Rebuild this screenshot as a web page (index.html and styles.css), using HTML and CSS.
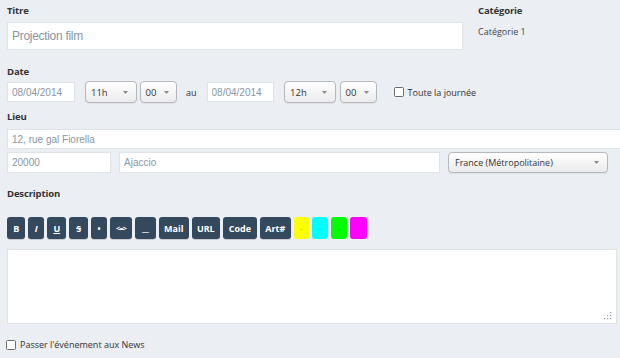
FILE: index.html
```html
<!DOCTYPE html>
<html lang="fr">
<head>
<meta charset="utf-8">
<link rel="stylesheet" href="styles.css">
</head>
<body>
<div class="page">
  <div class="row-top">
    <div class="col-title">
      <div class="lbl">Titre</div>
      <input class="field field-title" value="Projection film">
    </div>
    <div class="col-cat">
      <div class="lbl">Catégorie</div>
      <div class="cat-val">Catégorie 1</div>
    </div>
  </div>

  <div class="lbl lbl-date">Date</div>
  <div class="row-date">
    <input class="field field-date" value="08/04/2014">
    <div class="sel sel-h gap-11"><span>11h</span><svg class="arr" width="5" height="3" viewBox="0 0 5 3"><path d="M0 0H5L2.5 3Z"/></svg></div>
    <div class="sel sel-m gap-3"><span>00</span><svg class="arr" width="5" height="3" viewBox="0 0 5 3"><path d="M0 0H5L2.5 3Z"/></svg></div>
    <span class="au">au</span>
    <input class="field field-date gap-10" value="08/04/2014">
    <div class="sel sel-h gap-9"><span>12h</span><svg class="arr" width="5" height="3" viewBox="0 0 5 3"><path d="M0 0H5L2.5 3Z"/></svg></div>
    <div class="sel sel-m gap-4"><span>00</span><svg class="arr" width="5" height="3" viewBox="0 0 5 3"><path d="M0 0H5L2.5 3Z"/></svg></div>
    <label class="check gap-17"><input type="checkbox" class="box"><span>Toute la journée</span></label>
  </div>

  <div class="lbl lbl-lieu">Lieu</div>
  <input class="field field-addr" value="12, rue gal Fiorella">
  <div class="row-city">
    <input class="field field-zip" value="20000">
    <input class="field field-city" value="Ajaccio">
    <div class="sel sel-country"><span>France (Métropolitaine)</span><svg class="arr" width="5" height="3" viewBox="0 0 5 3"><path d="M0 0H5L2.5 3Z"/></svg></div>
  </div>

  <div class="lbl lbl-desc">Description</div>
  <div class="toolbar">
    <span class="btn w-b"><b>B</b></span>
    <span class="btn w-i"><i>I</i></span>
    <span class="btn w-u"><u>U</u></span>
    <span class="btn w-s"><s>S</s></span>
    <span class="btn w-dot">•</span>
    <span class="btn w-lr">&lt;=&gt;</span>
    <span class="btn w-line">__</span>
    <span class="btn w-mail">Mail</span>
    <span class="btn w-url">URL</span>
    <span class="btn w-code">Code</span>
    <span class="btn w-art">Art#</span>
    <span class="swatch sw-y w-y">-</span>
    <span class="swatch sw-c w-c">-</span>
    <span class="swatch sw-g w-g">-</span>
    <span class="swatch sw-m w-m">-</span>
  </div>

  <div class="ta-wrap">
    <textarea class="ta"></textarea>
    <svg class="grip" width="8" height="8" viewBox="0 0 8 8">
      <rect x="6" y="0" width="1.2" height="1.2"/>
      <rect x="6" y="3" width="1.2" height="1.2"/>
      <rect x="3" y="3" width="1.2" height="1.2"/>
      <rect x="6" y="6" width="1.2" height="1.2"/>
      <rect x="3" y="6" width="1.2" height="1.2"/>
      <rect x="0" y="6" width="1.2" height="1.2"/>
    </svg>
  </div>

  <label class="check check-news"><input type="checkbox" class="box"><span>Passer l'événement aux News</span></label>
</div>
</body>
</html>
```
FILE: styles.css
```css
html, body {
  margin: 0;
  padding: 0;
  background: #ebeef2;
  overflow: hidden;
}
.page {
  width: 620px;
  height: 358px;
  box-sizing: border-box;
  padding: 3px 0 0 7px;
  font-family: "Open Sans", "Liberation Sans", sans-serif;
  color: #333;
  overflow: hidden;
}
.lbl {
  font-size: 9.5px;
  font-weight: 700;
  line-height: 15px;
  color: #333;
  letter-spacing: -0.15px;
}
.row-top {
  display: flex;
}
.col-title {
  width: 456px;
  display: flex;
  flex-direction: column;
}
.col-cat {
  margin-left: 15px;
}
.cat-val {
  margin-top: 6px;
  font-size: 9px;
  line-height: 15px;
  color: #444;
}
.field {
  box-sizing: border-box;
  border: 1px solid #dfe3e8;
  background: #fff;
  font-family: "Liberation Sans", Arial, sans-serif;
  font-size: 10px;
  color: #8a96a4;
  padding: 0 0 0 4px;
  margin: 0;
  outline: none;
  height: 20px;
  border-radius: 0;
}
.field-title {
  margin-top: 4px;
  width: 456px;
  height: 28px;
  font-size: 12px;
  letter-spacing: -0.3px;
  padding-left: 4px;
}
.lbl-date { margin-top: 14px; }
.row-date {
  margin-top: 2px;
  display: flex;
  align-items: center;
  height: 22px;
}
.field-date { width: 67.5px; }
.gap-3 { margin-left: 2.5px; }
.gap-4 { margin-left: 3.5px; }
.gap-9 { margin-left: 10px; }
.gap-10 { margin-left: 10px; }
.gap-11 { margin-left: 10.5px; }
.gap-17 { margin-left: 17px; }
.sel {
  box-sizing: border-box;
  height: 22px;
  display: flex;
  align-items: center;
  justify-content: space-between;
  border: 1px solid #b4b8bd;
  border-radius: 4px;
  background: linear-gradient(#ffffff, #ebebeb);
  box-shadow: 0 1px 1px rgba(0, 0, 0, 0.06);
  font-size: 9.5px;
  color: #333;
  padding: 0 8px 0 5px;
}
.sel-h { width: 52px; }
.sel-m { width: 37px; padding-right: 7px; }
.arr { fill: #8a8a8a; display: block; }
.au {
  margin-left: 9.5px;
  font-size: 9px;
  color: #333;
}
.check {
  display: flex;
  align-items: center;
  font-size: 9px;
  color: #333;
  line-height: 15px;
}
.box {
  appearance: none;
  -webkit-appearance: none;
  box-sizing: border-box;
  width: 10px;
  height: 10px;
  margin: 0 4px 0 0;
  border: 1px solid #6d6d6d;
  border-radius: 1.5px;
  background: #fff;
}
.lbl-lieu { margin-top: 6px; }
.field-addr {
  display: block;
  margin-top: 5px;
  width: 640px;
}
.row-city {
  margin-top: 3px;
  display: flex;
  align-items: flex-start;
}
.field-zip { width: 104px; height: 20.5px; }
.field-city { width: 321px; margin-left: 8px; height: 20.5px; }
.sel-country {
  width: 160px;
  height: 21px;
  margin-left: 8px;
  padding: 0 8px 0 6px;
  font-size: 9px;
}
.lbl-desc { margin-top: 13px; }
.toolbar {
  margin-top: 16px;
  display: flex;
  gap: 3px;
  height: 22px;
}
.btn, .swatch {
  box-sizing: border-box;
  height: 22px;
  border-radius: 3px;
  display: flex;
  align-items: center;
  justify-content: center;
  font-size: 9px;
  font-weight: 700;
  color: #fff;
}
.btn {
  background: #34495e;
  box-shadow: 0 1px 0 rgba(0, 0, 0, 0.15);
}
.btn b { font-weight: 700; }
.w-b { width: 18.3px; }
.w-i { width: 16px; }
.w-u { width: 19px; }
.w-s { width: 18.7px; }
.w-dot { width: 16px; font-size: 8px; }
.w-lr { width: 21.7px; font-size: 7.5px; letter-spacing: -1px; }
.w-line { width: 21.3px; letter-spacing: -0.5px; padding-bottom: 2px; }
.w-mail { width: 29.7px; }
.w-url { width: 28.3px; }
.w-code { width: 34px; }
.w-art { width: 30.7px; }
.w-y { width: 15.6px; }
.w-c { width: 16px; }
.w-g { width: 16px; }
.w-m { width: 16.4px; }
.swatch {
  font-size: 7px;
  font-weight: 400;
  color: rgba(0, 0, 0, 0.3);
}
.sw-y { background: #ffff00; color: #c8a000; }
.sw-c { background: #00ffff; color: #3aa; }
.sw-g { background: #00ff00; color: #2a2; }
.sw-m { background: #ff00ff; color: #b3b; }
.ta-wrap {
  position: relative;
  margin-top: 10px;
  width: 610px;
  height: 75px;
}
.ta {
  display: block;
  box-sizing: border-box;
  width: 610px;
  height: 75px;
  margin: 0;
  border: 1px solid #dfe3e8;
  background: #fff;
  resize: none;
  outline: none;
}
.grip {
  position: absolute;
  right: 5px;
  bottom: 4px;
  fill: #9a9a9a;
}
.check-news {
  margin-top: 13px;
  margin-left: -1px;
}
```
